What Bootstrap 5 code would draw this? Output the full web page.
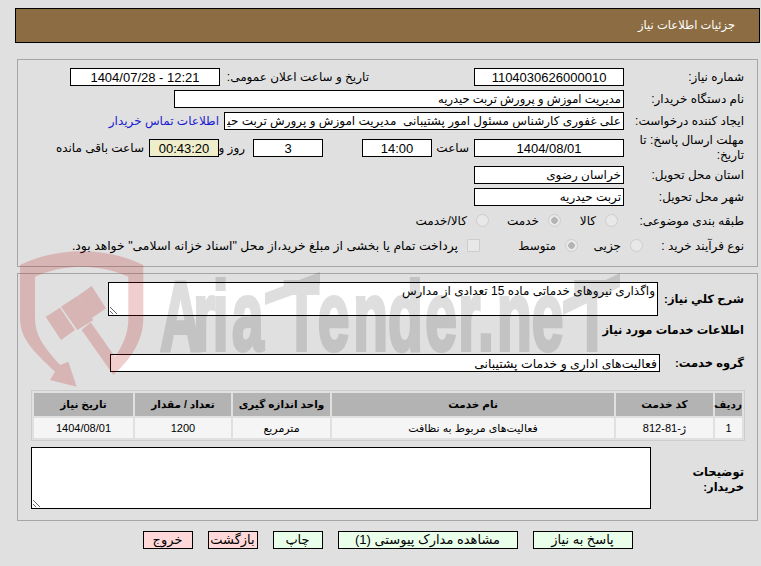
<!DOCTYPE html>
<html lang="fa" dir="rtl">
<head>
<meta charset="utf-8">
<title>جزئیات اطلاعات نیاز</title>
<link href="https://cdn.jsdelivr.net/npm/bootstrap@5.3.0/dist/css/bootstrap.min.css" rel="stylesheet">
<style>
html,body{height:100%}
body{background:#e0e0e0;color:#000;font-family:"Liberation Sans","DejaVu Sans",sans-serif;font-size:12px;line-height:15px;overflow:hidden}
.page{position:relative;width:745px;margin-left:15px;margin-right:1px;padding-top:8px}
.wm{position:absolute;left:-15px;top:227px;z-index:5;pointer-events:none;direction:ltr}
.wm-shield{fill:#b80f0f;opacity:.2}
.wm-word{opacity:.125}
.wm-text{font-family:"Liberation Sans",sans-serif;font-weight:700;fill:#000;stroke:#000;stroke-width:4px}
.front{position:relative;z-index:1}
.head-bar{height:35px;background:#8c6d43;border:1px solid #000;color:#fff;font-size:11.5px;padding-right:24px}
.pane{margin:0 2px;border:1px solid #a6a6a6;padding:8px 13px 0 0}
.pane-a{height:208px;margin-top:16px}
.pane-b{height:248px;margin-top:6px}
.frow{height:18px;margin-bottom:4px}
.lbl{width:120px;flex:none;white-space:nowrap}
.gap-a{margin-bottom:9px}
.form-control.fld{width:150px;height:18px;min-height:0;padding:0 2px;border:1px solid #000;border-radius:0;background:#fff;color:#000;font-size:12px;line-height:16px;flex:none;box-shadow:none}
.form-control.fld.ctr{text-align:center;font-size:13px}
.form-control.fld.w-450{width:450px;font-size:11.5px}
.form-control.fld.w-400{width:400px}
.form-control.fld.w-70{width:70px}
.form-control.fld.w-550{width:550px;font-size:12.4px}
.form-control.fld.clock{background:#eeeecb}
.lbl-mid{width:149px;margin-right:105px;white-space:nowrap;flex:none}
.s-time{width:42px;padding-right:5px;flex:none}
.s-day{width:34px;padding-right:8px;flex:none;white-space:nowrap}
.s-left{padding-right:5px;white-space:nowrap}
.sp-39{margin-right:39px}
.lnk{color:#1a1ad0;text-decoration:none;margin-right:5px;white-space:nowrap}
.form-check-input.opt{width:13px;height:13px;margin:-2px 0 0;float:none;flex:none;background-color:#e8e8e8;border:1px solid #cdcdcd;opacity:1;background-image:none}
.form-check-input.opt:checked{background-image:radial-gradient(circle,#b4b4b4 0 3px,#e8e8e8 3.6px);background-color:#e8e8e8;border-color:#cdcdcd}
.form-check-input.sq{border-radius:1px}
.opts-a{height:18px;margin:6px 0 7px}
.opts-b{height:18px}
.lead-a{width:126px;flex:none;white-space:nowrap}
.lead-b{width:101px;flex:none;white-space:nowrap}
.radio-txt{padding-right:9px;flex:none;white-space:nowrap}
.long-txt{font-size:12.4px}
.w-a1{width:44px}.w-a2{width:59px}
.w-b1{width:52px}.w-b2{width:85px}
.strong-lbl{font-weight:700;font-size:11.5px;white-space:nowrap}
.lbl-b{width:86px;flex:none}
.form-control.txa{display:block;height:34px;min-height:0;width:550px;padding:0 2px;border:1px solid #000;border-radius:0;font-size:12px;line-height:16px;background:#fff;color:#000;box-shadow:none;resize:both;flex:none}
.form-control.txa-b{height:62px;width:620px}
.sec-title{height:15px;margin:7px 0 16px}
.lbl-g{width:84px;flex:none}
.table.grid{width:713px;margin:18px -1px 0 0;border-collapse:separate;border-spacing:2px;border:1px solid #cdcdcd;table-layout:fixed;font-size:11px;--bs-table-bg:transparent}
.table.grid>*>*>*{padding:0;border:0;text-align:center;vertical-align:middle;box-shadow:none;color:#000}
.table.grid th{height:23px;background:#b3b3b3;font-weight:700;font-size:10.5px;white-space:nowrap}
.table.grid td{height:20px;background:#f5f5f5}
.c1{width:27px}.c2{width:97px}.c3{width:282px}.c4{width:97px}.c5{width:96px}.c6{width:99px}
.lbl-d{width:93px;flex:none;margin-top:18px;white-space:normal}
.desc-row{margin-top:6px}
.foot{gap:15px;margin-top:10px}
.btn.act{height:18px;padding:0;border:1px solid #000;border-radius:0;color:#000;font-size:13px;line-height:16px;width:50px}
.act.ok{background:#eaffea}
.act.no{background:#ffd9d9}
.btn.act.w-100px{width:100px}
.btn.act.w-180px{width:180px}
</style>
</head>
<body>
<div class="page">
  <svg class="wm" width="640" height="170" viewBox="0 0 640 170" aria-hidden="true">
    <g class="wm-shield" transform="translate(0,8) scale(.3333)">
      <path d="M60 90C170 35 320 35 430 90V250C430 320 390 375 340 420L245 285L272 262L345 365C370 330 385 295 385 250V125C300 85 190 85 105 125V250C105 300 130 335 180 390L205 380L230 455L150 435L165 410C100 350 60 310 60 250Z"/>
      <path d="M137 245L180 218L225 285L183 315Z M183 215L232 183L280 255L232 285Z M233 183L275 153L318 220L275 250Z"/>
    </g>
    <g class="wm-word">
      <text class="wm-text" transform="scale(.58,1)" y="123" font-size="98" x="276 333 367 400 490 548 609 669 733 790 824 857 917 991">AriaTender.neT</text>
      <path d="M265 66L320 45V58L265 78Z M563 74L620 46V60L563 88Z"/>
    </g>
  </svg>
  <div class="front">
    <div class="head-bar d-flex align-items-center">جزئیات اطلاعات نیاز</div>

    <section class="pane pane-a">
      <div class="frow d-flex align-items-center">
        <label class="lbl">شماره نیاز:</label>
        <input class="form-control fld ctr" value="1104030626000010" readonly>
        <label class="lbl-mid">تاریخ و ساعت اعلان عمومی:</label>
        <input class="form-control fld ctr" value="12:21 - 1404/07/28" readonly>
      </div>
      <div class="frow d-flex align-items-center">
        <label class="lbl">نام دستگاه خریدار:</label>
        <input class="form-control fld w-450" value="مدیریت اموزش و پرورش تربت حیدریه" readonly>
      </div>
      <div class="frow d-flex align-items-center gap-a">
        <label class="lbl">ایجاد کننده درخواست:</label>
        <input class="form-control fld w-400" value="علی غفوری کارشناس مسئول امور پشتیبانی  مدیریت اموزش و پرورش تربت حیدریه" readonly>
        <a class="lnk" href="#">اطلاعات تماس خریدار</a>
      </div>
      <div class="frow d-flex align-items-center gap-a">
        <label class="lbl lh-sm text-wrap">مهلت ارسال پاسخ: تا تاریخ:</label>
        <input class="form-control fld ctr" value="1404/08/01" readonly>
        <span class="s-time">ساعت</span>
        <input class="form-control fld ctr w-70" value="14:00" readonly>
        <input class="form-control fld ctr w-70 sp-39" value="3" readonly>
        <span class="s-day">روز و</span>
        <input class="form-control fld ctr w-70 clock" value="00:43:20" readonly>
        <span class="s-left">ساعت باقی مانده</span>
      </div>
      <div class="frow d-flex align-items-center">
        <label class="lbl">استان محل تحویل:</label>
        <input class="form-control fld" value="خراسان رضوی" readonly>
      </div>
      <div class="frow d-flex align-items-center">
        <label class="lbl">شهر محل تحویل:</label>
        <input class="form-control fld" value="تربت حیدریه" readonly>
      </div>
      <div class="opts-a d-flex align-items-center">
        <label class="lead-a">طبقه بندی موضوعی:</label>
        <input class="form-check-input opt" type="radio" name="t1" disabled><span class="radio-txt w-a1">کالا</span>
        <input class="form-check-input opt" type="radio" name="t1" checked disabled><span class="radio-txt w-a2">خدمت</span>
        <input class="form-check-input opt" type="radio" name="t1" disabled><span class="radio-txt">کالا/خدمت</span>
      </div>
      <div class="opts-b d-flex align-items-center">
        <label class="lead-b">نوع فرآیند خرید :</label>
        <input class="form-check-input opt" type="radio" name="t2" disabled><span class="radio-txt w-b1">جزیی</span>
        <input class="form-check-input opt" type="radio" name="t2" checked disabled><span class="radio-txt w-b2">متوسط</span>
        <input class="form-check-input opt sq" type="checkbox" disabled><span class="radio-txt long-txt">پرداخت تمام یا بخشی از مبلغ خرید،از محل "اسناد خزانه اسلامی" خواهد بود.</span>
      </div>
    </section>

    <section class="pane pane-b">
      <div class="d-flex align-items-center">
        <label class="lbl-b strong-lbl">شرح کلي نياز:</label>
        <textarea class="form-control txa" readonly>واگذاری نیروهای خدماتی ماده 15 تعدادی از مدارس</textarea>
      </div>
      <div class="sec-title strong-lbl">اطلاعات خدمات مورد نیاز</div>
      <div class="d-flex align-items-center">
        <label class="lbl-g strong-lbl">گروه خدمت:</label>
        <input class="form-control fld w-550" value="فعالیت‌های اداری و خدمات پشتیبانی" readonly>
      </div>
      <table class="table grid">
        <thead>
          <tr>
            <th class="c1">ردیف</th><th class="c2">کد خدمت</th><th class="c3">نام خدمت</th><th class="c4">واحد اندازه گیری</th><th class="c5">تعداد / مقدار</th><th class="c6">تاریخ نیاز</th>
          </tr>
        </thead>
        <tbody>
          <tr>
            <td>1</td><td>ژ-81-812</td><td>فعالیت‌های مربوط به نظافت</td><td>مترمربع</td><td>1200</td><td>1404/08/01</td>
          </tr>
        </tbody>
      </table>
      <div class="desc-row d-flex align-items-start">
        <label class="lbl-d strong-lbl">توضیحات خریدار:</label>
        <textarea class="form-control txa txa-b" readonly></textarea>
      </div>
    </section>

    <div class="foot d-flex justify-content-center">
      <button type="button" class="btn act ok w-100px">پاسخ به نیاز</button>
      <button type="button" class="btn act ok w-180px">مشاهده مدارک پیوستی (1)</button>
      <button type="button" class="btn act ok">چاپ</button>
      <button type="button" class="btn act no">بازگشت</button>
      <button type="button" class="btn act no">خروج</button>
    </div>
  </div>
</div>
</body>
</html>
